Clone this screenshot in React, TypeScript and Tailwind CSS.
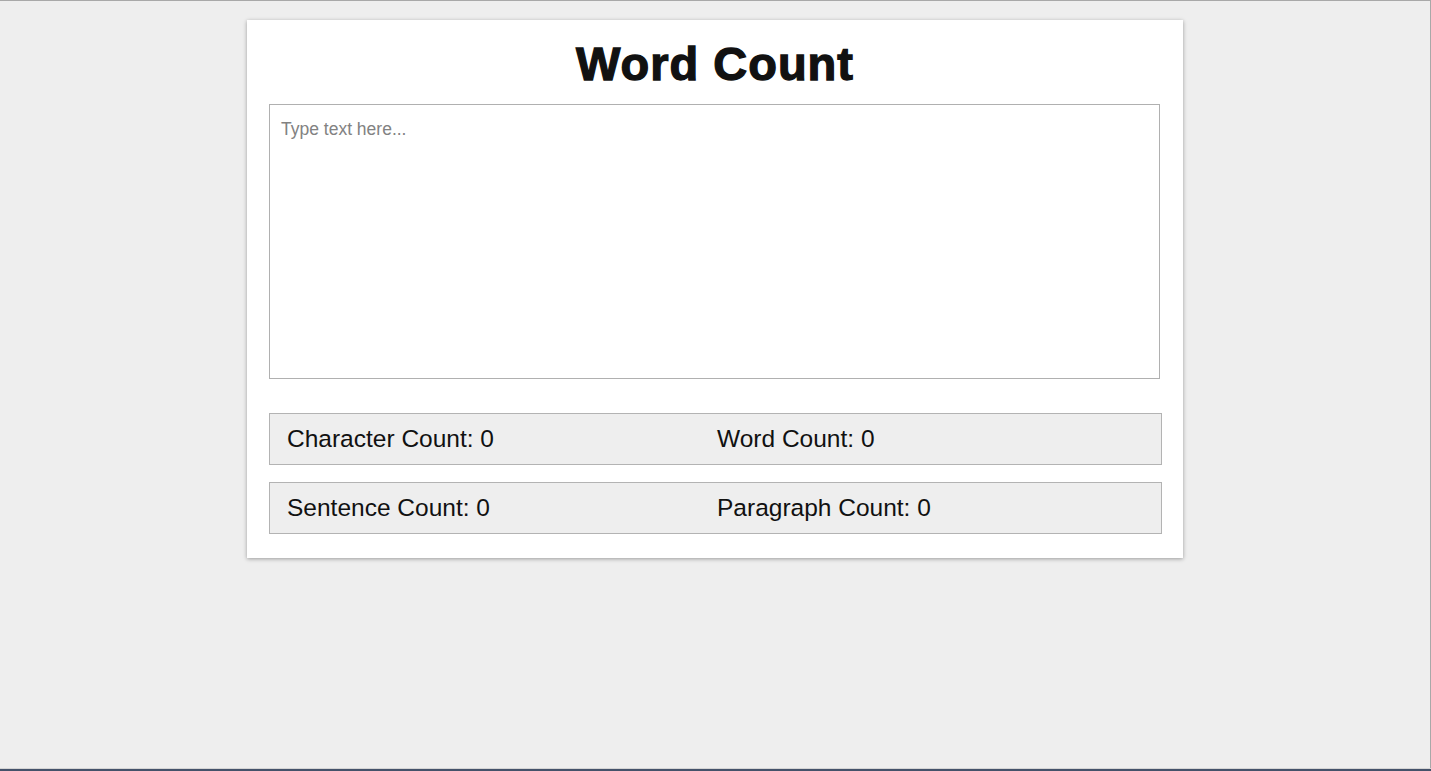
import React, { useState } from 'react';

const countStats = (text: string) => {
  const trimmed = text.trim();
  return {
    characters: text.length,
    words: trimmed ? trimmed.split(/\s+/).length : 0,
    sentences: trimmed ? (trimmed.match(/[^.!?]+[.!?]*/g) || []).length : 0,
    paragraphs: trimmed ? trimmed.split(/\n+/).filter((p) => p.trim()).length : 0,
  };
};

const StatRow: React.FC<{ left: string; right: string; className?: string }> = ({ left, right, className }) => (
  <div
    className={`w-[893px] h-[52px] border border-[#b3b3b3] bg-[#eeeeee] flex items-center pl-[17px] text-[24.5px] text-[#111111] ${className || ''}`}
  >
    <div className="w-[430px]">{left}</div>
    <div>{right}</div>
  </div>
);

const App: React.FC = () => {
  const [text, setText] = useState('');
  const stats = countStats(text);

  return (
    <div className="h-[771px] w-full flex flex-col bg-[#eeeeee] font-['Liberation_Sans',Arial,sans-serif] overflow-hidden">
      <div className="flex-1 border-t border-r border-[#a8a8a8]">
        <div className="w-[936px] mx-auto mt-[19px] bg-white shadow-[0_1px_4px_rgba(0,0,0,0.35)] px-[22px] pt-[20px] pb-[24px]">
          <h1 className="text-[47px] leading-[47px] font-bold text-center text-[#111111] tracking-[1px] [-webkit-text-stroke:1.3px_#111111]">
            Word Count
          </h1>
          <textarea
            value={text}
            onChange={(e) => setText(e.target.value)}
            placeholder="Type text here..."
            className="block mt-[17px] w-[891px] h-[275px] border border-[#b0b0b0] px-[11px] pt-[14px] pb-[11px] text-[17.5px] leading-[20px] text-[#111111] placeholder:text-[#828282] resize-none outline-none"
          />
          <StatRow
            className="mt-[34px]"
            left={`Character Count: ${stats.characters}`}
            right={`Word Count: ${stats.words}`}
          />
          <StatRow
            className="mt-[17px]"
            left={`Sentence Count: ${stats.sentences}`}
            right={`Paragraph Count: ${stats.paragraphs}`}
          />
        </div>
      </div>
      <div className="h-[1px] bg-[#d4d4d4]" />
      <div className="h-[2px] bg-[#44526a]" />
    </div>
  );
};

export default App;
